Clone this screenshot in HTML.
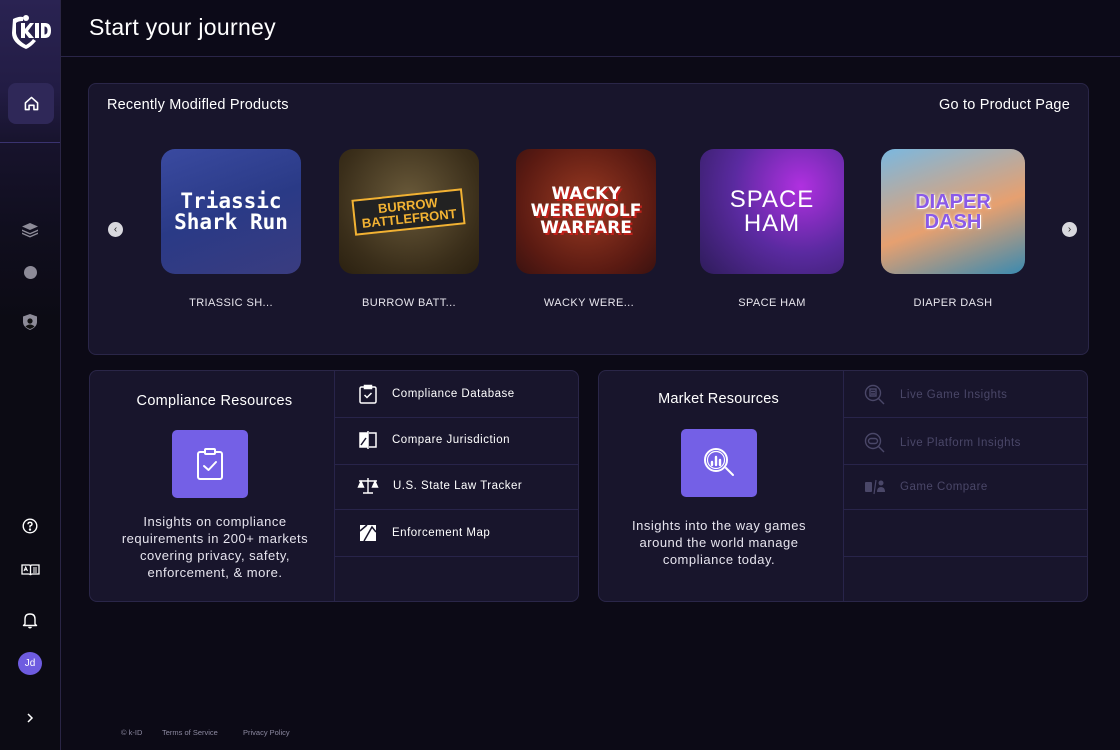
<!DOCTYPE html>
<html><head><meta charset="utf-8"><style>
*{box-sizing:border-box;margin:0;padding:0}
body{width:1120px;height:750px;overflow:hidden;background:#0c0a16;font-family:"Liberation Sans",sans-serif;color:#fff;position:relative}
.side{position:absolute;left:0;top:0;width:61px;height:750px;background:linear-gradient(#2a2352 0,#221c44 90px,#17132c 145px,#100e1e 230px,#0c0b14 320px);border-right:1px solid #2a2545}
.sep{position:absolute;left:0;top:142px;width:60px;height:1px;background:#3a3370}
.home{position:absolute;left:8px;top:83px;width:46px;height:41px;border-radius:8px;background:#2f2858}
.ic{position:absolute;left:0;width:60px;display:flex;justify-content:center}
.header{position:absolute;left:61px;top:0;right:0;height:57px;border-bottom:1px solid #2a2548;background:#0c0a18}
.header h1{position:absolute;left:28px;top:14px;font-size:23px;font-weight:normal;letter-spacing:.3px}
.panel{position:absolute;background:#18152c;border:1px solid #2a2648;border-radius:8px}
.t{position:absolute;font-size:14.5px}
.img{position:absolute;top:149px;height:125px;border-radius:14px;overflow:hidden;display:flex;align-items:center;justify-content:center;text-align:center;font-weight:bold;line-height:1}
.lbl{position:absolute;top:297px;font-size:11px;text-align:center;letter-spacing:.4px;color:#e8e6ee}
.arrow{position:absolute;width:15px;height:15px;border-radius:50%;background:#d8d8de;color:#222;font-size:10px;display:flex;align-items:center;justify-content:center;top:222px}
.row{position:absolute;left:0;right:0;height:1px;background:#28244a}
.item{position:absolute;font-size:11.5px;letter-spacing:.5px;display:flex;align-items:center}
.item svg{margin-right:14px}
.big{position:absolute;width:76px;height:68px;border-radius:5px;background:#7460e6;display:flex;align-items:center;justify-content:center}
.desc{position:absolute;text-align:center;font-size:13px;line-height:17px;letter-spacing:.5px;color:#e6e4ee}
.dim{color:#4a4768}
.foot{position:absolute;top:727px;font-size:7.5px;color:#8c89a0}
</style></head><body>
<div class="side">
  <svg style="position:absolute;left:9px;top:13px" width="44" height="36" viewBox="0 0 44 36">
    <path d="M4 6 Q10 3 14 4 L14 8 Q9 8 7 10 L7 20 Q8 27 17 32 Q22 29 24 26 L27 28 Q22 34 17 36 Q3 30 3 20 Z" fill="#fff"/>
    <circle cx="17" cy="5" r="3" fill="#fff"/>
    <path d="M12 10 L16 10 L16 16 L21 10 L25 10 L19 18 L25 25 L20 25 L16 20 L16 25 L12 25Z" fill="#fff"/>
    <rect x="26" y="10" width="4" height="15" fill="#fff"/>
    <path d="M32 10 L36 10 Q42 10 42 17.5 Q42 25 36 25 L32 25Z M35.5 13.5 L35.5 21.5 Q38.5 21.5 38.5 17.5 Q38.5 13.5 35.5 13.5Z" fill="#fff" fill-rule="evenodd"/>
  </svg>
  <div class="home"><svg style="position:absolute;left:15px;top:12px" width="17" height="17" viewBox="0 0 14 14" fill="none" stroke="#fff" stroke-width="1.3"><path d="M2 6.5 L7 2 L12 6.5 V12 H9 V8.5 H5 V12 H2 Z" stroke-linejoin="round"/></svg></div>
  <div class="sep"></div>
  <div class="ic" style="top:222px"><svg width="18" height="16" viewBox="0 0 18 16" fill="#8d8b98"><path d="M9 1 L17 4.5 L9 8 L1 4.5Z"/><path d="M1 7.5 L9 11 L17 7.5 L17 9 L9 12.5 L1 9Z"/><path d="M1 10.5 L9 14 L17 10.5 L17 12 L9 15.5 L1 12Z"/></svg></div>
  <div class="ic" style="top:266px"><div style="width:13px;height:13px;border-radius:50%;background:#8d8b98"></div></div>
  <div class="ic" style="top:313px"><svg width="16" height="18" viewBox="0 0 16 18"><path d="M8 1 L15 3.5 V9 Q15 14 8 17 Q1 14 1 9 V3.5Z" fill="#8d8b98"/><circle cx="8" cy="8" r="2.6" fill="#111"/><path d="M3.5 13.5 Q8 9.5 12.5 13.5 Q10 15.5 8 16 Q6 15.5 3.5 13.5Z" fill="#111"/></svg></div>
  <div class="ic" style="top:518px"><svg width="16" height="16" viewBox="0 0 16 16" fill="none" stroke="#fff" stroke-width="1.4"><circle cx="8" cy="8" r="6.8"/><path d="M6 6.3 Q6 4.3 8 4.3 Q10 4.3 10 6 Q10 7.3 8 8 V9.5"/><circle cx="8" cy="11.6" r=".5" fill="#fff"/></svg></div>
  <div class="ic" style="top:563px"><svg width="19" height="14" viewBox="0 0 19 14" fill="none" stroke="#fff" stroke-width="1.3"><path d="M1 2 H8 Q9.5 2 9.5 3.5 V12 Q9 11 7.5 11 H1Z M18 2 H11 Q9.5 2 9.5 3.5 V12 Q10 11 11.5 11 H18Z"/><path d="M3 8 L4.7 4 L6.5 8 M3.6 6.7 H5.9 M12 5 H16 M12 7 H16 M12 9 H16" stroke-width="1"/></svg></div>
  <div class="ic" style="top:611px"><svg width="16" height="18" viewBox="0 0 16 18" fill="none" stroke="#fff" stroke-width="1.4"><path d="M3 13 V8 Q3 3 8 3 Q13 3 13 8 V13 L14.5 14.5 H1.5Z M6.5 16 Q8 17.5 9.5 16" stroke-linejoin="round"/></svg></div>
  <div class="ic" style="top:652px"><div style="width:24px;height:23px;border-radius:50%;background:#6e5ce0;font-size:10px;display:flex;align-items:center;justify-content:center">Jd</div></div>
  <div class="ic" style="top:712px"><svg width="10" height="12" viewBox="0 0 10 12" fill="none" stroke="#fff" stroke-width="1.5"><path d="M3 2 L7 6 L3 10"/></svg></div>
</div>
<div class="header"><h1>Start your journey</h1></div>

<div class="panel" style="left:88px;top:83px;width:1001px;height:272px"></div>
<div class="t" style="left:107px;top:97px;letter-spacing:.2px">Recently Modifled Products</div>
<div class="t" style="left:939px;top:97px;letter-spacing:.2px">Go to Product Page</div>
<div class="arrow" style="left:108px">‹</div>
<div class="arrow" style="left:1062px">›</div>

<div class="img" style="left:161px;width:140px;background:linear-gradient(160deg,#3a4aa0,#2a3a86 50%,#3a3c80);font-family:'DejaVu Sans Mono',monospace;font-size:21px;color:#fff">Triassic<br>Shark Run</div>
<div class="img" style="left:339px;width:140px;background:radial-gradient(circle at 50% 40%,#6a5a3a,#3a2e1a 70%,#2a2010);"><div style="background:#222;color:#f2b233;font-size:13px;padding:3px 6px;transform:rotate(-6deg);border:2px solid #f2b233">BURROW<br>BATTLEFRONT</div></div>
<div class="img" style="left:516px;width:140px;background:radial-gradient(circle at 50% 45%,#9a3a22,#5a1a12 70%,#3a1210);color:#fff;font-size:17px;text-shadow:2px 2px 0 #c0201a;font-family:'DejaVu Sans',sans-serif">WACKY<br>WEREWOLF<br>WARFARE</div>
<div class="img" style="left:700px;width:144px;background:radial-gradient(circle at 70% 30%,#b030e0,#5a2aa0 50%,#2e1c5a);color:#fff;font-size:24px;font-weight:normal;letter-spacing:1px">SPACE<br>HAM</div>
<div class="img" style="left:881px;width:144px;background:linear-gradient(160deg,#7ab8e0,#e6a070 55%,#3a8ab0);color:#8a5ae8;font-size:20px;text-shadow:0 0 3px #fff,1px 1px 0 #fff">DIAPER<br>DASH</div>

<div class="lbl" style="left:161px;width:140px">TRIASSIC SH...</div>
<div class="lbl" style="left:339px;width:140px">BURROW BATT...</div>
<div class="lbl" style="left:516px;width:146px">WACKY WERE...</div>
<div class="lbl" style="left:700px;width:144px">SPACE HAM</div>
<div class="lbl" style="left:881px;width:144px">DIAPER DASH</div>

<div class="panel" style="left:89px;top:370px;width:490px;height:232px;overflow:hidden">
  <div style="position:absolute;left:244px;top:0;bottom:0;width:1px;background:#28244a"></div>
  <div style="position:absolute;left:245px;right:0;top:0;bottom:0">
    <div class="row" style="top:46px"></div><div class="row" style="top:93px"></div><div class="row" style="top:138px"></div><div class="row" style="top:185px"></div>
  </div>
</div>
<div class="t" style="left:89px;width:251px;text-align:center;top:393px;letter-spacing:.3px">Compliance Resources</div>
<div class="big" style="left:172px;top:430px"><svg width="36" height="36" viewBox="0 0 36 36" fill="none" stroke="#fff" stroke-width="2"><rect x="6" y="6" width="24" height="27" rx="2"/><rect x="13" y="3" width="10" height="5" rx="1" fill="#7460e6"/><path d="M12 20 L16.5 24 L24 16" stroke-linecap="round" stroke-linejoin="round"/></svg></div>
<div class="desc" style="left:104px;width:222px;top:513px">Insights on compliance requirements in 200+ markets covering privacy, safety, enforcement, &amp; more.</div>
<div class="item" style="left:358px;top:384px"><svg width="20" height="20" viewBox="0 0 20 20" fill="none" stroke="#fff" stroke-width="1.5"><rect x="2" y="3" width="16" height="16" rx="1.5"/><rect x="6.5" y="1.5" width="7" height="3" fill="#fff"/><path d="M6.5 11 L9 13.5 L13.5 9"/></svg>Compliance Database</div>
<div class="item" style="left:358px;top:430px"><svg width="20" height="20" viewBox="0 0 20 20" fill="none" stroke="#fff" stroke-width="1.5"><path d="M2 3 H9 V17 H2Z" fill="#fff"/><path d="M11 3 H18 V17 H11 M10 1 V19"/><path d="M3 15 L8 8" stroke="#18152c"/></svg>Compare Jurisdiction</div>
<div class="item" style="left:357px;top:476px"><svg width="22" height="20" viewBox="0 0 22 20" fill="none" stroke="#fff" stroke-width="1.4"><path d="M11 2 V17 M6 17 H16 M2 5 H20"/><path d="M1.5 11 L4 5.5 L6.5 11 Z M15.5 11 L18 5.5 L20.5 11Z" fill="#fff"/></svg>U.S. State Law Tracker</div>
<div class="item" style="left:358px;top:523px"><svg width="20" height="20" viewBox="0 0 20 20"><path d="M2 2 H18 V18 H2Z" fill="#fff"/><path d="M2 8 L9 2 M6 18 L14 4 L18 9" stroke="#18152c" stroke-width="1.5" fill="none"/></svg>Enforcement Map</div>

<div class="panel" style="left:598px;top:370px;width:490px;height:232px;overflow:hidden">
  <div style="position:absolute;left:244px;top:0;bottom:0;width:1px;background:#28244a"></div>
  <div style="position:absolute;left:245px;right:0;top:0;bottom:0">
    <div class="row" style="top:46px"></div><div class="row" style="top:93px"></div><div class="row" style="top:138px"></div><div class="row" style="top:185px"></div>
  </div>
</div>
<div class="t" style="left:598px;width:241px;text-align:center;top:391px;letter-spacing:.2px">Market Resources</div>
<div class="big" style="left:681px;top:429px"><svg width="38" height="38" viewBox="0 0 38 38" fill="none" stroke="#fff" stroke-width="2"><circle cx="16" cy="16" r="11"/><circle cx="16" cy="16" r="8.5" stroke-width="1.2"/><path d="M26 24 L33 31" stroke-linecap="round"/><path d="M12 18 V21 M16 13 V21 M20 16 V21" stroke-width="2.4" stroke-linecap="round"/></svg></div>
<div class="desc" style="left:610px;width:218px;top:517px">Insights into the way games around the world manage compliance today.</div>
<div class="item dim" style="left:864px;top:384px"><svg width="22" height="22" viewBox="0 0 22 22" fill="none" stroke="#4a4768" stroke-width="1.4"><circle cx="9" cy="9" r="7.5"/><path d="M14.5 14.5 L20 20"/><rect x="6" y="5" width="6" height="7"/><path d="M7 7.5 H11 M7 10 H11"/></svg>Live Game Insights</div>
<div class="item dim" style="left:864px;top:432px"><svg width="22" height="22" viewBox="0 0 22 22" fill="none" stroke="#4a4768" stroke-width="1.4"><circle cx="9" cy="9" r="7.5"/><path d="M14.5 14.5 L20 20"/><rect x="4.5" y="6.5" width="9" height="5" rx="2.5"/></svg>Live Platform Insights</div>
<div class="item dim" style="left:864px;top:477px"><svg width="22" height="20" viewBox="0 0 22 20" fill="#4a4768"><rect x="1" y="5" width="7" height="10" rx="1"/><path d="M10 17 L12 3" stroke="#4a4768" stroke-width="1.2"/><circle cx="17" cy="6" r="2.5"/><path d="M13 15 Q13 10 17 10 Q21 10 21 15Z"/></svg>Game Compare</div>

<div class="foot" style="left:121px;top:728px">© k-ID</div>
<div class="foot" style="left:162px;top:728px">Terms of Service</div>
<div class="foot" style="left:243px;top:728px">Privacy Policy</div>
</body></html>
